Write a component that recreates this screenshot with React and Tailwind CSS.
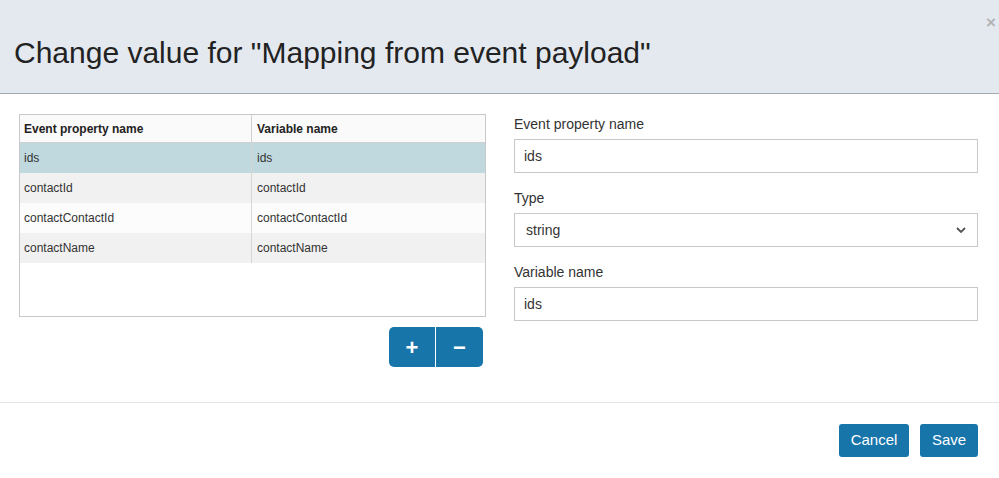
import { useState } from 'react';

const rows = [
    { prop: 'ids', variable: 'ids' },
    { prop: 'contactId', variable: 'contactId' },
    { prop: 'contactContactId', variable: 'contactContactId' },
    { prop: 'contactName', variable: 'contactName' },
];

export default function App() {
    const [selected, setSelected] = useState(0); // 선택된 행

    return (
        <div className="w-[999px] h-[478px] bg-white text-[#333] font-[family-name:'Liberation_Sans',Arial,sans-serif] flex flex-col">
            {/* 헤더 */}
            <div className="relative h-[94px] bg-[#e4e9f0] border-b border-[#a3aab2] flex items-center pl-[14px] pt-[12px]">
                <h1 className="text-[30px] leading-none text-[#222]">Change value for "Mapping from event payload"</h1>
                <button className="absolute right-[3px] top-[14px] text-[#b3b3b3] text-[17px] font-bold leading-none">×</button>
            </div>

            {/* 본문 */}
            <div className="flex h-[309px] border-b border-[#e5e5e5]">
                <div className="w-[467px] ml-[19px] mt-[20px]">
                    <div className="h-[203px] border border-[#c8c8c8]">
                        <div className="flex h-[28px] bg-[#fafafa] border-b border-[#d0d0d0] text-[12px] font-bold text-[#222]">
                            <div className="w-[232px] border-r border-[#d0d0d0] flex items-center pl-[4px]">Event property name</div>
                            <div className="flex-1 flex items-center pl-[5px]">Variable name</div>
                        </div>
                        {rows.map((row, index) => (
                            <div
                                key={index}
                                onClick={() => setSelected(index)}
                                className={`flex h-[30px] text-[12px] text-[#333] ${index === selected ? 'bg-[#c0d9de]' : index % 2 === 1 ? 'bg-[#f1f1f1]' : 'bg-[#fcfcfc]'}`}
                            >
                                <div className="w-[232px] border-r border-[#d6d6d6] flex items-center pl-[4px]">{row.prop}</div>
                                <div className="flex-1 flex items-center pl-[5px]">{row.variable}</div>
                            </div>
                        ))}
                    </div>
                    <div className="flex justify-end mt-[10px] mr-[3px]">
                        <div className="flex h-[40px] rounded-[5px] overflow-hidden bg-[#1775aa]">
                            <button className="w-[47px] flex items-center justify-center text-white text-[22px] font-bold border-r border-white">+</button>
                            <button className="w-[47px] flex items-center justify-center text-white text-[22px] font-bold">−</button>
                        </div>
                    </div>
                </div>

                <div className="flex-1 ml-[28px] mr-[21px] mt-[22px] flex flex-col text-[14px]">
                    <label className="h-[17px] leading-[17px] text-[#333]">Event property name</label>
                    <input
                        defaultValue="ids"
                        className="mt-[6px] h-[34px] border border-[#c9c9c9] px-[9px] text-[14px] text-[#333] outline-none"
                    />
                    <label className="mt-[17px] h-[17px] leading-[17px]">Type</label>
                    <div className="mt-[6px] h-[34px] border border-[#c9c9c9] flex items-center justify-between px-[11px] text-[14px]">
                        <span>string</span>
                        <svg width="10" height="6" viewBox="0 0 10 6">
                            <path d="M1 1l4 4 4-4" fill="none" stroke="#555" strokeWidth="1.8" />
                        </svg>
                    </div>
                    <label className="mt-[17px] h-[17px] leading-[17px]">Variable name</label>
                    <input
                        defaultValue="ids"
                        className="mt-[6px] h-[34px] border border-[#c9c9c9] px-[9px] text-[14px] text-[#333] outline-none"
                    />
                </div>
            </div>

            {/* 푸터 */}
            <div className="flex justify-end gap-[11px] pr-[21px] pt-[21px]">
                <button className="h-[33px] w-[70px] rounded-[3px] bg-[#1775aa] text-white text-[15px]">Cancel</button>
                <button className="h-[33px] w-[58px] rounded-[3px] bg-[#1775aa] text-white text-[15px]">Save</button>
            </div>
        </div>
    );
}
